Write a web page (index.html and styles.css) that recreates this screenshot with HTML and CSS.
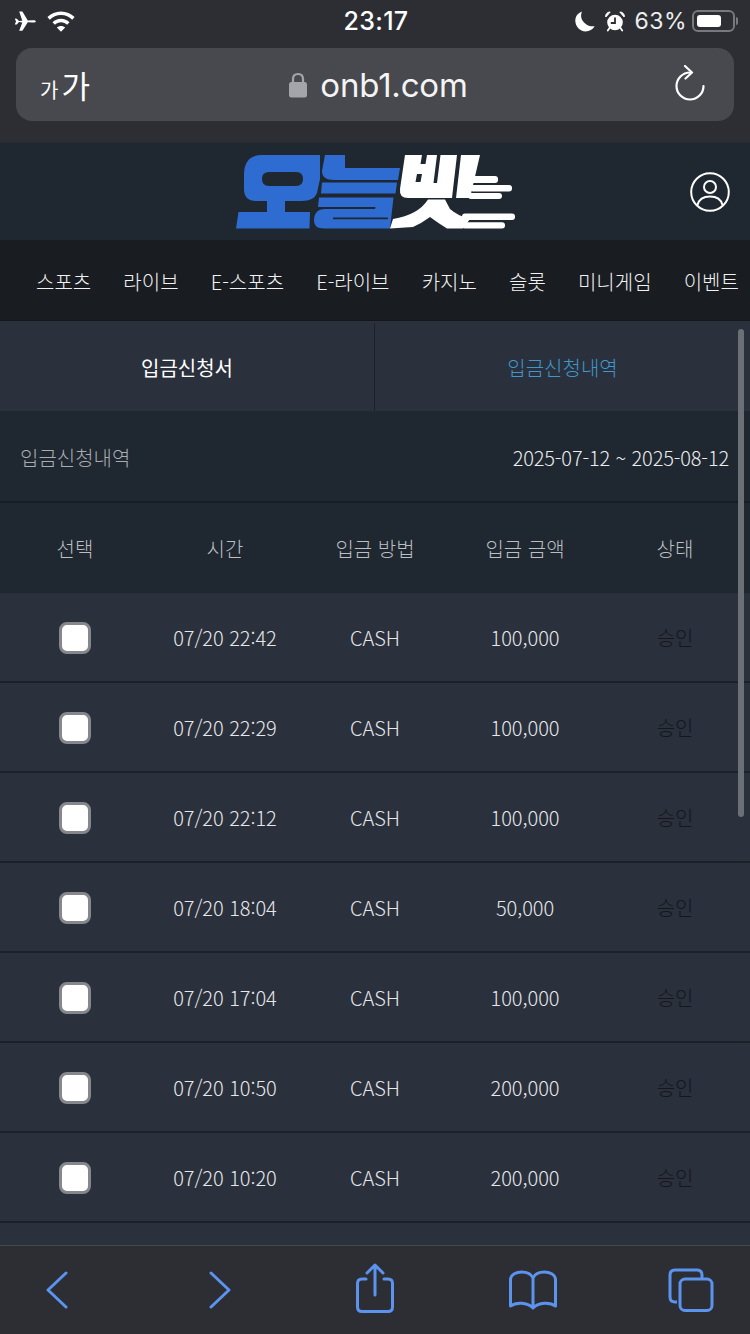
FILE: index.html
```html
<!DOCTYPE html>
<html lang="ko">
<head>
<meta charset="utf-8">
<title>onb1.com</title>
<link rel="stylesheet" href="styles.css">
</head>
<body>
<div class="screen">
  <header class="chrome">
    <div class="status">
      <div class="status-left">
        <svg class="ic-plane" viewBox="0 0 22 20"><path d="M.8 7.600 2.800 7.700 5 10 8.300 9.800 5.200 .4 8.400 .4 13.800 9.500 19 9.300C20.800 9.300 21.800 9.800 21.800 10.400 21.800 11 20.800 11.500 19 11.500L13.800 11.300 8.400 19.800 5.200 19.800 8.300 11.400 5 11.100 2.800 13.400 .8 13.500 2 10.600Z" fill="#fff"/></svg>
        <svg class="ic-wifi" viewBox="0 0 28 21"><path d="M14 .5C19.400.5 24 2.600 27.600 6.100L25.200 8.700C22.300 5.800 18.400 4 14 4S5.700 5.800 2.800 8.700L.4 6.100C4 2.600 8.600.5 14 .5Z M14 7.800C17.300 7.800 20.300 9.100 22.500 11.300L20.100 13.800C18.500 12.300 16.400 11.300 14 11.300S9.500 12.300 7.900 13.800L5.500 11.300C7.700 9.100 10.700 7.800 14 7.800Z M14 15C15.600 15 17.100 15.600 18.200 16.600L14 20.800 9.800 16.600C10.900 15.600 12.400 15 14 15Z" fill="#fff"/></svg>
      </div>
      <div class="clock">23:17</div>
      <div class="status-right">
        <svg class="ic-moon" viewBox="0 0 20 21"><path d="M7 .6C2.800 2 .3 5.600.3 9.800.3 15.500 4.900 20.400 10.600 20.400 14.400 20.400 17.800 18.400 19.600 15.200 13.600 16.200 7.600 12 6.300 6.700 5.900 4.500 6.200 2.400 7 .6Z" fill="#fff"/></svg>
        <svg class="ic-alarm" viewBox="0 0 20 21"><circle cx="10" cy="11.500" r="7.800" fill="#fff"/><path d="M10 6.500V12H5.800" fill="none" stroke="#2c2e33" stroke-width="1.800"/><path d="M.6 5.500C.6 2.800 2.600 1 5.200 1L.9 6ZM19.400 5.500C19.400 2.800 17.400 1 14.800 1L19.100 6Z" fill="#fff" stroke="#fff"/><path d="M4.500 17 2.800 19.500M15.500 17 17.200 19.500" stroke="#fff" stroke-width="1.800" stroke-linecap="round"/></svg>
        <span class="pct">63%</span>
        <div class="battery"><div class="battery-level"></div></div>
        <div class="battery-cap"></div>
      </div>
    </div>
    <div class="urlbar">
      <span class="aa"><span class="aa-small">가</span>가</span>
      <div class="address">
        <svg class="ic-lock" viewBox="0 0 18 26"><path d="M4 11V7C4 3.800 6 2 9 2S14 3.800 14 7V11" fill="none" stroke="#a3a5aa" stroke-width="2.200"/><rect y="10" width="18" height="15.500" rx="2.500" fill="#a3a5aa"/></svg>
        <span class="domain">onb1.com</span>
      </div>
      <svg class="ic-reload" viewBox="0 0 32 36"><path d="M16 7.500A13.500 13.500 0 1 0 29.500 21" fill="none" stroke="#fff" stroke-width="2.200" stroke-linecap="round"/><path d="M11 1 18 7.500 11.500 13.500" fill="none" stroke="#fff" stroke-width="2.200" stroke-linecap="round" stroke-linejoin="round"/></svg>
    </div>
  </header>

  <main class="page">
    <div class="site-head">
      <svg class="logo" viewBox="0 0 300 85">
        <g fill="#2f6cd1">
          <path d="M32 6H90V30L87 44Q84 52 72 52H55V63H80L79.500 79.500H6L8.500 63H37V52H26Q14 52 14 40V26Q14 6 32 6ZM39 23Q32 23 32 30 32 37 39 37H66Q73 37 73 30 73 23 66 23Z" fill-rule="evenodd"/>
          <path d="M95 6H115V19H170L168 31H104Q92 31 92 22Z"/>
          <path d="M92 33.500H167L165.500 44.500H91Z"/>
          <path d="M89 48.500H163.500L160 79.500H94Q84 79.500 84 72 84 60 95 60H145L145.500 58H88Z"/>
        </g>
        <path d="M103 68.500H158L157.800 70.300H103Z" fill="#1f2730"/>
        <g fill="#fff">
          <path d="M175 6H250L240 49H178Q169 49 170 40Z"/>
          <rect x="240" y="27" width="28" height="7" rx="3"/>
          <rect x="240" y="36" width="42" height="6.500" rx="3"/>
          <rect x="238" y="44" width="34" height="6" rx="3"/>
          <path d="M198 50.500H215L220 60Q228 67 240 70L233 79.500H217Q208 74 200 68 192 74 183 78L160 79.500 163 70Q188 66 198 50.500Z"/>
          <rect x="232" y="64.500" width="53" height="6.500" rx="3"/>
          <rect x="232" y="73.300" width="43" height="6.200" rx="3"/>
        </g>
        <g fill="#1f2730">
          <path d="M192 6H197L195.500 15H190.500Z"/>
          <path d="M187 25H192L190.500 33H185.500Z"/>
          <path d="M207 6H210.500L207 34H203.500Z"/>
          <path d="M227 6H231L226 49H222Z"/>
        </g>
      </svg>
      <svg class="ic-user" viewBox="0 0 40 40"><circle cx="20" cy="20" r="18.800" fill="none" stroke="#fff" stroke-width="2"/><circle cx="20" cy="15" r="6" fill="none" stroke="#fff" stroke-width="2"/><path d="M7.500 33C9 27 14 24.500 20 24.500S31 27 32.500 33" fill="none" stroke="#fff" stroke-width="2"/></svg>
    </div>

    <nav class="menu">
      <span>스포츠</span><span>라이브</span><span>E-스포츠</span><span>E-라이브</span><span>카지노</span><span>슬롯</span><span>미니게임</span><span>이벤트</span>
    </nav>

    <div class="tabs">
      <div class="tab tab-plain">입금신청서</div>
      <div class="tab tab-active">입금신청내역</div>
    </div>

    <div class="list-title">
      <span class="list-name">입금신청내역</span>
      <span class="list-range">2025-07-12 ~ 2025-08-12</span>
    </div>

    <div class="row row-head">
      <div>선택</div><div>시간</div><div>입금 방법</div><div>입금 금액</div><div>상태</div>
    </div>
    <div class="row"><div><span class="check"></span></div><div>07/20 22:42</div><div>CASH</div><div>100,000</div><div class="state">승인</div></div>
    <div class="row"><div><span class="check"></span></div><div>07/20 22:29</div><div>CASH</div><div>100,000</div><div class="state">승인</div></div>
    <div class="row"><div><span class="check"></span></div><div>07/20 22:12</div><div>CASH</div><div>100,000</div><div class="state">승인</div></div>
    <div class="row"><div><span class="check"></span></div><div>07/20 18:04</div><div>CASH</div><div>50,000</div><div class="state">승인</div></div>
    <div class="row"><div><span class="check"></span></div><div>07/20 17:04</div><div>CASH</div><div>100,000</div><div class="state">승인</div></div>
    <div class="row"><div><span class="check"></span></div><div>07/20 10:50</div><div>CASH</div><div>200,000</div><div class="state">승인</div></div>
    <div class="row"><div><span class="check"></span></div><div>07/20 10:20</div><div>CASH</div><div>200,000</div><div class="state">승인</div></div>
    <div class="row row-blank"></div>

    <div class="scrollbar"></div>
  </main>

  <footer class="toolbar">
    <svg class="tool-narrow" viewBox="0 0 22 38"><path d="M20 2 2 19 20 36" fill="none" stroke="#5b93ee" stroke-width="3" stroke-linecap="round" stroke-linejoin="round"/></svg>
    <svg class="tool-narrow" viewBox="0 0 22 38"><path d="M2 2 20 19 2 36" fill="none" stroke="#5b93ee" stroke-width="3" stroke-linecap="round" stroke-linejoin="round"/></svg>
    <svg class="tool-share" viewBox="0 0 40 50"><path d="M11 16H7Q2.500 16 2.500 20.500V44Q2.500 48.500 7 48.500H33Q37.500 48.500 37.500 44V20.500Q37.500 16 33 16H29" fill="none" stroke="#5b93ee" stroke-width="3" stroke-linecap="round"/><path d="M20 32V2M12 10 20 2 28 10" fill="none" stroke="#5b93ee" stroke-width="3" stroke-linecap="round" stroke-linejoin="round"/></svg>
    <svg class="tool-book" viewBox="0 0 50 40"><path d="M25 8C23 3.500 18 2 13.500 2 9 2 2.500 4 2.500 10V36C8 32 19 32 25 38 31 32 42 32 47.500 36V10C47.500 4 41 2 36.500 2 32 2 27 3.500 25 8V38" fill="none" stroke="#5b93ee" stroke-width="3" stroke-linecap="round" stroke-linejoin="round"/></svg>
    <svg class="tool-tabs" viewBox="0 0 46 44"><path d="M9 34H7Q2 34 2 29V7Q2 2 7 2H29Q34 2 34 7V10" fill="none" stroke="#5b93ee" stroke-width="3"/><rect x="12" y="11" width="32" height="31.500" rx="5" fill="none" stroke="#5b93ee" stroke-width="3"/></svg>
  </footer>
</div>
</body>
</html>
```
FILE: styles.css
```css
* { box-sizing: border-box; }

html, body { margin: 0; padding: 0; background: #2c2e33; }

.screen {
  width: 750px;
  height: 1334px;
  display: flex;
  flex-direction: column;
  overflow: hidden;
  font-family: "Noto Sans CJK KR", "Noto Sans", sans-serif;
}

/* Browser chrome */
.chrome {
  height: 143px;
  flex: none;
  background: #2c2e33;
  padding-bottom: 21px;
  display: flex;
  flex-direction: column;
  border-bottom: 1px solid #292b30;
}

.status {
  height: 42px;
  flex: none;
  display: grid;
  grid-template-columns: 1fr auto 1fr;
  align-items: center;
  padding: 0 12px 0 14px;
  color: #fff;
  font-family: Inter, "Liberation Sans", sans-serif;
}

.status-left, .status-right { display: flex; align-items: center; }
.status-right { justify-content: flex-end; }

.ic-plane { width: 22px; height: 20px; }
.ic-wifi { width: 28px; height: 21px; margin-left: 11px; }
.ic-moon { width: 20px; height: 21px; }
.ic-alarm { width: 20px; height: 21px; margin-left: 10px; }

.clock { font-size: 25px; font-weight: 500; letter-spacing: .3px; }
.pct { font-size: 23px; font-weight: 400; margin-left: 9px; color: #eceded; letter-spacing: .5px; }

.battery {
  width: 43px;
  height: 22px;
  margin-left: 5px;
  padding: 3px;
  border: 2px solid #78797d;
  border-radius: 6px;
}
.battery-level { width: 24px; height: 100%; background: #fff; border-radius: 3px; }
.battery-cap { width: 2px; height: 8px; margin-left: 1px; background: #78797d; border-radius: 0 2px 2px 0; }

.urlbar {
  position: relative;
  height: 73px;
  margin: 6px 16px 0;
  flex: none;
  background: #47494e;
  border-radius: 16px;
  display: flex;
  align-items: center;
  justify-content: center;
  color: #fff;
}

.aa {
  position: absolute;
  left: 24px;
  top: 50%;
  transform: translateY(calc(-50% - 1px));
  font-size: 31px;
  font-weight: 400;
  line-height: 1;
}
.aa-small { font-size: 20px; margin-right: 3px; }

.address { display: flex; align-items: center; gap: 13px; margin-left: 7px; }
.ic-lock { width: 18px; height: 26px; }
.domain { font-family: Inter, "Liberation Sans", sans-serif; font-size: 33px; font-weight: 400; letter-spacing: -.2px; color: #f4f4f5; }

.ic-reload { position: absolute; right: 28px; top: 17px; width: 32px; height: 36px; }

/* Site content */
.page {
  position: relative;
  flex: 1;
  min-height: 0;
  overflow: hidden;
  background: #2a303c;
}

.site-head {
  height: 97px;
  background: #1f2730;
  display: grid;
  grid-template-columns: 230px 300px 1fr;
  align-items: center;
}
.logo { grid-column: 2; width: 300px; height: 85px; }
.ic-user { grid-column: 3; justify-self: end; margin-right: 20px; width: 40px; height: 40px; }

.menu {
  height: 81px;
  background: #191c21;
  display: flex;
  align-items: center;
  gap: 32.15px;
  padding: 2px 0 0 36px;
  color: #f2f2f3;
  font-size: 20px;
  font-weight: 300;
  white-space: nowrap;
  border-bottom: 1px solid #15171b;
}

.tabs { height: 90px; display: flex; padding-top: 2px; }
.tab {
  flex: 0 0 375px;
  display: flex;
  align-items: center;
  justify-content: center;
  font-size: 20px;
}
.tab-plain { color: #fff; font-weight: 400; border-right: 1px solid #1c2129; }
.tab-active { color: #3f97cb; font-weight: 300; }

.list-title {
  height: 92px;
  background: #1f2730;
  border-bottom: 2px solid #181c22;
  display: flex;
  align-items: center;
  justify-content: space-between;
  padding: 2px 21px 0 20px;
  font-weight: 300;
  font-size: 20px;
}
.list-name { color: #a9acb0; }
.list-range { color: #ececee; letter-spacing: -.15px; }

.row {
  height: 90px;
  display: grid;
  grid-template-columns: repeat(5, 150px);
  align-items: center;
  justify-items: center;
  border-bottom: 2px solid #1d2129;
  color: #e6e7e9;
  font-size: 20px;
  font-weight: 300;
  letter-spacing: -.05px;
}
.row-head { background: #1f2730; border-bottom: 0; color: #bcbec1; letter-spacing: 0; }
.row-blank { border-bottom: 0; }
.state { color: #14171c; }

.check {
  display: block;
  width: 32px;
  height: 32px;
  margin-top: 2px;
  background: #fff;
  border: 3px solid #85878b;
  border-radius: 8px;
}

.scrollbar {
  position: absolute;
  top: 186px;
  right: 6px;
  width: 6px;
  height: 488px;
  border-radius: 3px;
  background: #6b6f76;
}

/* Bottom browser toolbar */
.toolbar {
  height: 89px;
  flex: none;
  background: #2c2e33;
  border-top: 1px solid #45474c;
  display: grid;
  grid-template-columns: 114px 212px 98px 218px 98px;
  align-items: center;
  justify-items: center;
}
.tool-narrow { width: 22px; height: 38px; }
.tool-share { width: 40px; height: 50px; margin-top: -4px; }
.tool-book { width: 50px; height: 40px; }
.tool-tabs { width: 46px; height: 44px; }
```
